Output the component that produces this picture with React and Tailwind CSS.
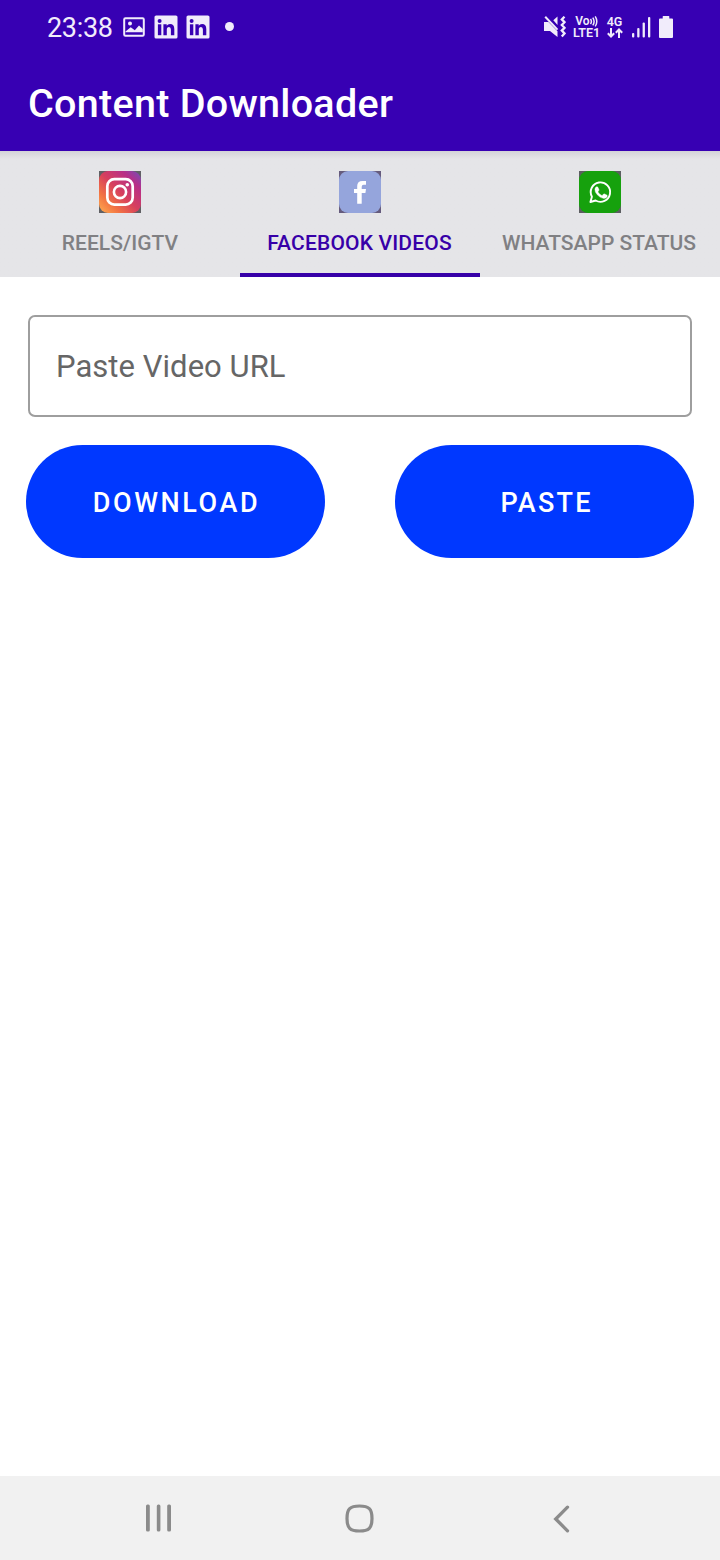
import React from "react";

function StatusBar() {
  return (
    <div className="flex h-[54px] items-center justify-between pl-[47px] pr-[47px] text-[#f1ecfb]">
      <div className="flex items-center">
        <span className="w-[76px] whitespace-nowrap pt-[2px] text-[27px] leading-[52px] tracking-[-0.3px]">23:38</span>
        <svg width="22" height="20" viewBox="0 0 22 20">
          <rect x="1.200" y="1.200" width="19.600" height="17.600" rx="1.200" fill="none" stroke="currentColor" strokeWidth="2" />
          <path d="M2.500 14.500L7.700 10.200L11.800 13.300L16 8.500L19.800 12V15.300H2.500Z" fill="currentColor" />
          <circle cx="7" cy="6.600" r="2" fill="currentColor" />
        </svg>
        <LinkedIn className="ml-[9px]" />
        <LinkedIn className="ml-[8px]" />
        <span className="ml-[15px] mt-[-2px] size-[9px] rounded-full bg-current" />
      </div>
      <div className="flex items-center">
        <svg width="22" height="22" viewBox="0 0 22 22" fill="none" className="mr-[7px]">
          <path d="M0 6h4.500L13.500 15.200V21L6 15H0Z" fill="currentColor" />
          <path d="M9.300 4.300L13.500 0.600V9Z" fill="currentColor" />
          <path d="M1.200 0.800L13.500 13.600" stroke="currentColor" strokeWidth="2" />
          <path d="M20.500 0.700L17.800 3.400L20.500 6.200L17.800 9L20.500 11.800L17.800 14.600L20.500 17.400L17.800 20.400" stroke="currentColor" strokeWidth="2.300" />
        </svg>
        <div className="w-[27px] whitespace-nowrap text-center text-[12.500px] font-semibold leading-[12px]">
          <div className="flex h-[12px] items-center justify-center">
            <span className="text-[12px]">Vo</span>
            <svg width="8" height="11" viewBox="0 0 8 11" fill="none" stroke="currentColor" strokeWidth="1.500">
              <path d="M0.500 3q1.800 2.500 0 5M2.800 1.600q2.600 3.900 0 7.800" />
              <path d="M5.200 0.400q3.200 5 0 10" />
            </svg>
          </div>
          <div>LTE1</div>
        </div>
        <div className="ml-[6px] w-[17px] text-center text-[12.500px] font-semibold leading-[12px]">
          <div>4G</div>
          <svg width="16" height="10" viewBox="0 0 16 10" className="mx-auto" fill="none" stroke="currentColor" strokeWidth="2">
            <path d="M4 0V8.500M0.800 5.200L4 8.500L7.200 5.200M12 10V1.500M8.800 4.800L12 1.500L15.200 4.800" />
          </svg>
        </div>
        <svg width="19" height="21" viewBox="0 0 19 21" className="ml-[9px]" fill="currentColor">
          <rect x="0" y="16" width="2.300" height="4.500" rx="1" />
          <rect x="5.200" y="11" width="2.300" height="9.500" rx="1" />
          <rect x="10.600" y="5.500" width="2.300" height="15" rx="1" />
          <rect x="16" y="0" width="2.300" height="20.500" rx="1" />
        </svg>
        <svg width="14" height="22" viewBox="0 0 14 22" className="ml-[8px]" fill="currentColor">
          <path d="M3.700 0.600Q3.700 0 4.300 0H9.700Q10.300 0 10.300 0.600V2.500H13Q14 2.500 14 3.500V21Q14 22 13 22H1Q0 22 0 21V3.500Q0 2.500 1 2.500H3.700Z" />
        </svg>
      </div>
    </div>
  );
}

function LinkedIn({ className }) {
  return (
    <svg width="24" height="24" viewBox="0 0 24 24" className={className}>
      <rect x="0.500" y="0.500" width="23" height="23" rx="1.600" fill="currentColor" />
      <g fill="#3700b3">
        <circle cx="5.600" cy="6" r="2" />
        <rect x="3.900" y="9.300" width="3.400" height="10.900" />
        <path d="M9.400 9.300h3.300v1.500q1.100-1.800 3.300-1.800 4.300 0 4.300 5v6.200h-3.400v-5.600q0-2.700-1.900-2.700-2.200 0-2.200 2.700v5.600H9.400Z" />
      </g>
    </svg>
  );
}

function InstagramIcon() {
  return (
    <svg width="42" height="42" viewBox="0 0 42 42">
      <defs>
        <linearGradient id="ig-base" x1="0" y1="1" x2="1" y2="0">
          <stop offset="0" stopColor="#ffae50" />
          <stop offset="0.250" stopColor="#f27343" />
          <stop offset="0.500" stopColor="#d7405d" />
          <stop offset="0.780" stopColor="#b72f88" />
          <stop offset="1" stopColor="#7150bc" />
        </linearGradient>
      </defs>
      <rect width="42" height="42" fill="#606064" />
      <rect width="42" height="42" rx="9" fill="url(#ig-base)" />
      <g fill="none" stroke="#fff">
        <rect x="8.300" y="8.200" width="25.400" height="25.400" rx="7" strokeWidth="2.700" />
        <circle cx="21" cy="21" r="6.100" strokeWidth="2.600" />
      </g>
      <circle cx="28.300" cy="13.700" r="1.800" fill="#fff" />
    </svg>
  );
}

function FacebookIcon() {
  return (
    <svg width="42" height="42" viewBox="0 0 42 42">
      <rect width="42" height="42" fill="#655b7d" />
      <rect width="42" height="42" rx="9" fill="#95a5dc" />
      <path d="M18.200 32.700V21.900H15V17.900h3.200v-2.800q0-5.200 5.300-5.200H27v3.900h-2.300q-2 0-2 1.900v2.200H27l-.6 4h-3.700v10.800Z" fill="#fff" />
    </svg>
  );
}

function WhatsAppIcon() {
  return (
    <svg width="42" height="42" viewBox="0 0 42 42">
      <rect width="42" height="42" fill="#5c5e61" />
      <rect width="42" height="42" rx="9" fill="#16a10d" />
      <path
        d="M11.400 31l1.500-5.300A9.700 9.700 0 1 1 16.600 29.500Z"
        fill="none"
        stroke="#fff"
        strokeWidth="1.900"
        strokeLinejoin="round"
      />
      <path
        d="M15.900 18.300q.1-1.600 1.500-2.500.9-.3 1.400.3l1.200 2.700q.1.600-.9 1.800-.2.300 0 .6 1.500 2.400 3.700 3.300.4.100.7-.2l1.100-1.300q.4-.4.900-.1l2.400 1.200q.6.400.2 1.700-.8 1.700-3.300 1.700-3.600-.3-6.700-3.900-2.300-2.600-2.200-5.300Z"
        fill="#fff"
        stroke="#fff"
        strokeWidth="0.400"
      />
    </svg>
  );
}

const tabs = [
  { label: "REELS/IGTV", Icon: InstagramIcon, spacing: "tracking-[0.05px]" },
  { label: "FACEBOOK VIDEOS", Icon: FacebookIcon, spacing: "tracking-[0.17px]", shift: "-translate-x-[0.5px]", active: true },
  { label: "WHATSAPP STATUS", Icon: WhatsAppIcon, spacing: "tracking-[0px]", shift: "-translate-x-px" },
];

export default function App() {
  return (
    <div className="flex h-[1560px] w-[720px] flex-col bg-white font-[Roboto,sans-serif]">
      <header className="h-[151px] shrink-0 bg-[#3700b3]">
        <StatusBar />
        <h1 className="pl-[28px] pt-[1px] text-[39.500px] font-medium leading-[97px] tracking-[0.280px] text-white">Content Downloader</h1>
      </header>

      <nav className="grid h-[126px] shrink-0 grid-cols-3 bg-[#e5e5e8] bg-linear-to-b from-[#d3d3d8] to-[#e5e5e8] to-[8px]">
        {tabs.map(({ label, Icon, spacing, shift, active }) => (
          <button
            key={label}
            className={
              "flex flex-col items-center whitespace-nowrap border-b-4 pt-[20px] text-[21px] font-medium " +
              spacing +
              (active ? " border-[#3700a8] text-[#3700a8]" : " border-transparent text-[#808083]")
            }
          >
            <Icon />
            <span className={"mt-[15px] leading-[30px] " + (shift ?? "")}>{label}</span>
          </button>
        ))}
      </nav>

      <main className="flex-1 px-[26px] pt-[38px]">
        <div className="mx-[2px]">
          <input
            type="text"
            placeholder="Paste Video URL"
            className="block h-[102px] w-full rounded-[7px] border-2 border-[#9e9e9e] px-[26px] text-[31px] tracking-[0.04px] text-black outline-none placeholder:text-[#666666]"
          />
        </div>
        <div className="mt-[28px] flex justify-between text-[27px] font-medium text-white">
          <button className="h-[113px] w-[299px] rounded-full bg-[#0038ff] pl-[2px] pt-[4px] tracking-[2.600px]">DOWNLOAD</button>
          <button className="h-[113px] w-[299px] rounded-full bg-[#0038ff] pl-[4px] pt-[4px] tracking-[2.200px]">PASTE</button>
        </div>
      </main>

      <footer className="flex h-[84px] shrink-0 items-center bg-[#f1f1f1] pl-[146px] text-[#8b8b8b]">
        <svg width="26" height="28" viewBox="0 0 26 28" fill="currentColor">
          <rect x="0" y="0.500" width="3.800" height="27" rx="1.500" />
          <rect x="10.800" y="0.500" width="3.600" height="27" rx="1.500" />
          <rect x="21.200" y="0.500" width="3.800" height="27" rx="1.500" />
        </svg>
        <svg width="30" height="30" viewBox="0 0 30 30" className="ml-[173px] mt-[1px]" fill="none" stroke="currentColor" strokeWidth="3.200">
          <path d="M14.500 2C24 2 27 5 27 14.500S24 27 14.500 27 2 24 2 14.500 5 2 14.500 2Z" />
        </svg>
        <svg width="18" height="28" viewBox="0 0 18 28" className="ml-[178px] mt-[1px]" fill="none" stroke="currentColor" strokeWidth="3.300" strokeLinecap="round" strokeLinejoin="miter">
          <path d="M14.500 2.200L2.700 14L14.500 25.800" />
        </svg>
      </footer>
    </div>
  );
}
